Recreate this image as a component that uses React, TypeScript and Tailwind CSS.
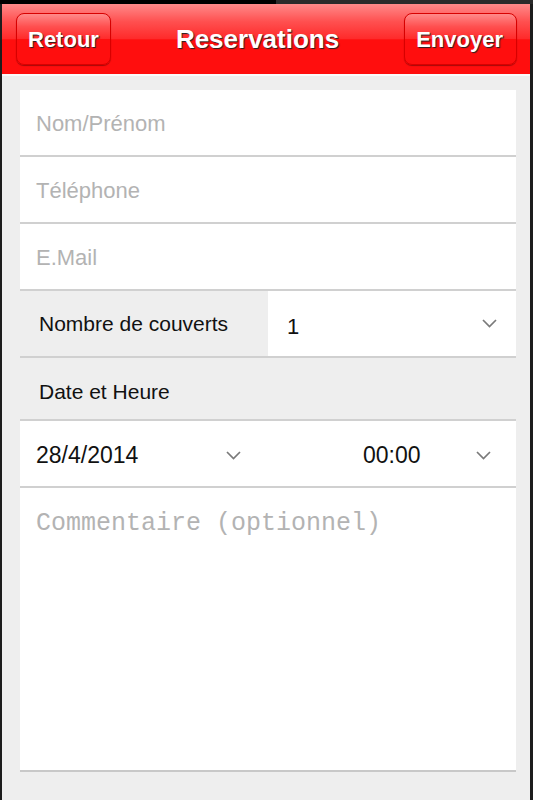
import React from "react";

const gloss =
  "bg-[linear-gradient(to_bottom,#ff8a8a_0%,#ff5050_25%,#ff2a2a_50%,#ff0e0e_51%,#ff0e0e_100%)]";

function Chevron() {
  return (
    <svg width="15" height="9" viewBox="0 0 15 9" className="shrink-0">
      <polyline
        points="1,1 7.5,7.5 14,1"
        fill="none"
        stroke="#7a7a7a"
        strokeWidth="1.7"
      />
    </svg>
  );
}

function Field({ text }: { text: string }) {
  return (
    <div className="h-[67px] bg-white border-b-2 border-[#d0d0d0] flex items-center pl-[16px] pt-[3px] text-[22px] leading-none text-[#b3b3b3]">
      {text}
    </div>
  );
}

export default function App() {
  return (
    <div className="w-[533px] h-[800px] flex flex-col overflow-hidden bg-[#1c1c1c] font-['Liberation_Sans',Arial,sans-serif]">
      <div className="h-[4px] flex shrink-0">
        <div className="w-[276px] bg-black" />
        <div className="flex-1 bg-[#2b2b2b]" />
      </div>
      <div className="flex-1 flex flex-col ml-[2px] mr-[3px] bg-[#eeeeee]">
        <header
          className={`h-[70px] shrink-0 flex items-center pl-[14px] pr-[13px] ${gloss}`}
        >
          <div
            className={`h-[52px] flex items-center px-[11px] rounded-[8px] border border-[#d80000] shadow-[0_1px_1px_rgba(0,0,0,0.35)] ${gloss} text-white text-[22px] font-bold [text-shadow:1px_1px_1px_#222]`}
          >
            Retour
          </div>
          <div className="flex-1 text-center text-white text-[26px] font-bold [text-shadow:1px_1px_1px_#222]">
            Reservations
          </div>
          <div
            className={`h-[52px] flex items-center pl-[11px] pr-[13px] rounded-[8px] border border-[#d80000] shadow-[0_1px_1px_rgba(0,0,0,0.35)] ${gloss} text-white text-[22px] font-bold [text-shadow:1px_1px_1px_#222]`}
          >
            Envoyer
          </div>
        </header>
        <div className="h-[2px] bg-[#fafafa] shrink-0" />
        <div className="pt-[14px] pl-[18px] pr-[14px] flex flex-col">
          <Field text="Nom/Prénom" />
          <Field text="Téléphone" />
          <Field text="E.Mail" />
          <div className="h-[67px] border-b-2 border-[#d0d0d0] grid grid-cols-2">
            <div className="bg-[#eeeeee] flex items-center pl-[19px] text-[21px] leading-none text-[#111]">
              Nombre de couverts
            </div>
            <div className="bg-white flex items-center justify-between pl-[19px] pr-[19px] pt-[6px] text-[22px] leading-none text-[#111]">
              <span>1</span>
              <span className="-mt-[6px]">
                <Chevron />
              </span>
            </div>
          </div>
          <div className="h-[63px] border-b-2 border-[#d0d0d0] flex items-center pl-[19px] pt-[6px] text-[21px] leading-none text-[#111]">
            Date et Heure
          </div>
          <div className="h-[67px] bg-white border-b-2 border-[#d0d0d0] grid grid-cols-2 text-[23px] leading-none text-[#111]">
            <div className="flex items-center justify-between pl-[16px] pr-[27px] pt-[3px]">
              <span>28/4/2014</span>
              <Chevron />
            </div>
            <div className="flex items-center justify-between pl-[95px] pr-[25px] pt-[3px]">
              <span>00:00</span>
              <Chevron />
            </div>
          </div>
          <div className="h-[284px] bg-white border-b-2 border-[#c8c8c8] pl-[16px] pt-[23px] text-[25px] leading-none text-[#b3b3b3] font-['Liberation_Mono','Courier_New',monospace]">
            Commentaire (optionnel)
          </div>
        </div>
      </div>
    </div>
  );
}
